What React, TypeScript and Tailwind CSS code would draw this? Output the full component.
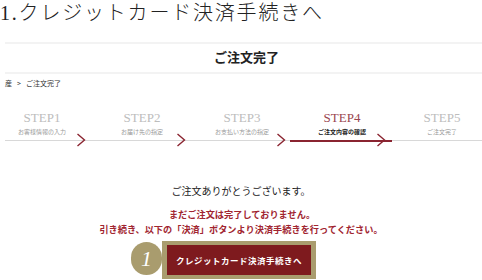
import React from "react";

const serif = { fontFamily: '"Liberation Serif", "Noto Sans CJK JP", serif' };

const steps = [
  { t: "STEP1", s: "お客様情報の入力" },
  { t: "STEP2", s: "お届け先の指定" },
  { t: "STEP3", s: "お支払い方法の指定" },
  { t: "STEP4", s: "ご注文内容の確認" },
  { t: "STEP5", s: "ご注文完了" },
];

function Chevron() {
  return (
    <svg width="10" height="14" viewBox="0 0 10 14" className="absolute right-[6px] top-[24px]">
      <path d="M1.5 1 L8.5 7 L1.5 13" fill="none" stroke="#8a2430" strokeWidth="1.4" />
    </svg>
  );
}

export default function App() {
  return (
    <div className="w-[482px] h-[280px] overflow-hidden bg-white relative">
      <div
        className="text-[20px] leading-[26px] tracking-[1.8px] text-[#222] font-light whitespace-nowrap"
        style={serif}
      >
        1.クレジットカード決済手続きへ
      </div>
      <div className="ml-[5px] mt-[16px] border-y-2 border-[#f3f3f3] h-[32px] flex items-center justify-center">
        <span className="text-[13px] font-bold text-[#222] ml-[6px]" style={serif}>
          ご注文完了
        </span>
      </div>
      <div
        className="ml-[5px] mt-[4px] text-[7px] leading-[10px] text-[#333] flex gap-[5px]"
        style={{ fontFamily: '"Noto Sans CJK JP", sans-serif' }}
      >
        <span>産</span>
        <span>&gt;</span>
        <span>ご注文完了</span>
      </div>
      <div className="mt-[21px] relative h-[42px]">
        <div className="absolute left-[5px] right-0 top-[31px] h-[1px] bg-[#d8d8d8]" />
        <div className="absolute left-[290px] w-[102px] top-[30.5px] h-[2px] bg-[#8a2430]" />
        <div className="flex ml-[-8px] w-[500px] relative">
          {steps.map((st, i) => (
            <div key={st.t} className="w-[100px] relative h-[42px] flex flex-col items-center">
              <div
                className={`mt-[2px] text-[13px] leading-[14px] ${i === 3 ? "text-[#9a4550]" : "text-[#bdbdbd]"}`}
                style={serif}
              >
                {st.t}
              </div>
              <div
                className={`text-[6px] leading-[8px] mt-[3px] ${i === 3 ? "text-[#222] font-bold" : "text-[#999]"}`}
                style={{ fontFamily: '"Noto Sans CJK JP", serif' }}
              >
                {st.s}
              </div>
              {i < 4 && <Chevron />}
            </div>
          ))}
        </div>
      </div>
      <div className="mt-[34px] text-center text-[10px] leading-[14px] text-[#222]" style={serif}>
        ご注文ありがとうございます。
      </div>
      <div
        className="mt-[8px] text-center text-[9.2px] leading-[15px] font-bold text-[#a12530]"
        style={{ fontFamily: '"Noto Sans CJK JP", sans-serif' }}
      >
        <div className="pl-[2px]">まだご注文は完了しておりません。</div>
        <div>引き続き、以下の「決済」ボタンより決済手続きを行ってください。</div>
      </div>
      <div className="mt-[4px] pl-[131px] flex items-start">
        <div className="w-[31px] h-[33px] mt-[1px] rounded-full bg-[#a99c6e] flex items-center justify-center">
          <span className="text-white italic text-[22px] leading-none" style={serif}>
            1
          </span>
        </div>
        <div className="bg-[#a99c6e] pl-[5px] pr-[5px] pt-[4px] pb-[4px]">
          <div
            className="w-[144px] h-[30px] bg-[#7e1a1e] flex items-center justify-center text-white text-[8.5px] font-bold tracking-[0.5px]"
            style={{ fontFamily: '"Noto Sans CJK JP", sans-serif' }}
          >
            クレジットカード決済手続きへ
          </div>
        </div>
      </div>
    </div>
  );
}
